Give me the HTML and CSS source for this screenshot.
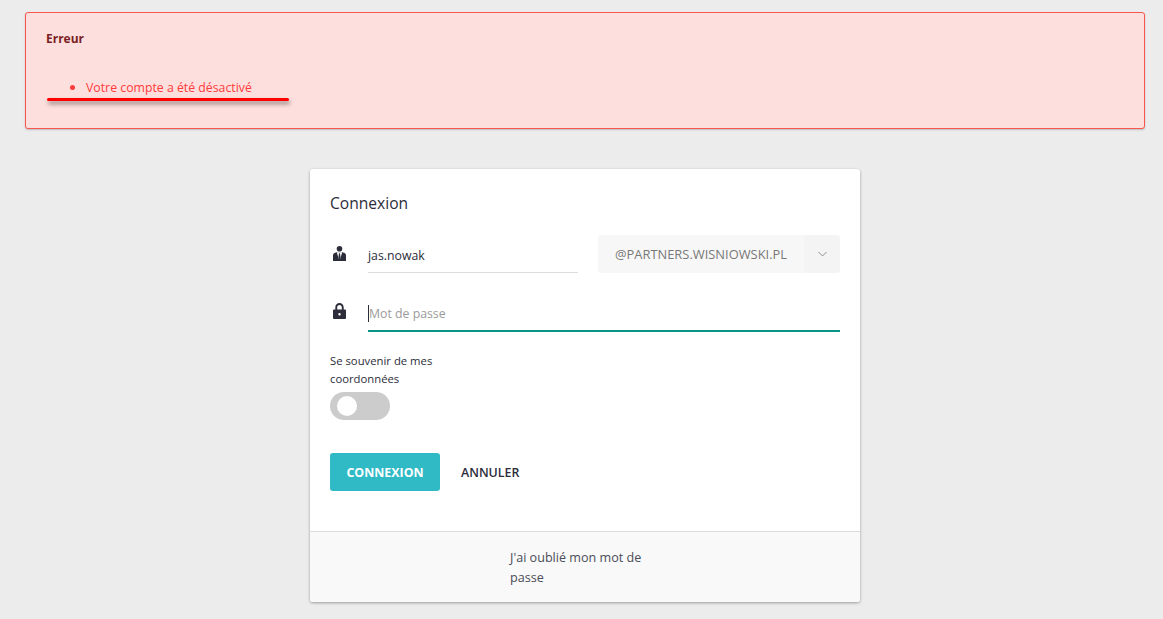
FILE: index.html
```html
<!DOCTYPE html>
<html lang="fr">
<head>
    <meta charset="UTF-8">
    <meta name="viewport" content="width=device-width, initial-scale=1.0">
    <title>Connexion</title>
    <link rel="stylesheet" href="styles.css">
</head>
<body>
    <div class="alert">
        <h4 class="alert-title">Erreur</h4>
        <ul class="alert-list">
            <li>Votre compte a été désactivé</li>
        </ul>
        <div class="alert-mark"></div>
    </div>

    <div class="card">
        <div class="card-body">
            <h2 class="card-title">Connexion</h2>

            <div class="field-row field-user">
                <svg class="field-icon icon-user" width="13" height="15" viewBox="0 0 13 15">
                    <circle cx="6.5" cy="2.8" r="2.8" fill="#2b2d3a"/>
                    <path d="M0 15V9.2C0 7.6 1.4 6.6 3.6 6.2H9.4C11.6 6.6 13 7.6 13 9.2V15Z" fill="#2b2d3a"/>
                    <path d="M3.8 6.2H9.2L7.4 12.4H5.6Z" fill="#fff"/>
                    <path d="M6 7.2H7L7.6 11.4L6.5 13.2L5.4 11.4Z" fill="#2b2d3a"/>
                </svg>
                <div class="input-user">jas.nowak</div>
                <div class="domain-select">
                    <span class="domain-value">@PARTNERS.WISNIOWSKI.PL</span>
                    <span class="domain-arrow">
                        <svg width="9" height="6" viewBox="0 0 9 6"><path d="M0.5 1L4.5 5L8.5 1" fill="none" stroke="#8a8f96" stroke-width="1"/></svg>
                    </span>
                </div>
            </div>

            <div class="field-row field-pass">
                <svg class="field-icon icon-lock" width="13" height="16" viewBox="0 0 14 17">
                    <path fill-rule="evenodd" d="M2.5 7V4.5C2.5 2 4.5 0 7 0S11.5 2 11.5 4.5V7H13C13.6 7 14 7.4 14 8V16C14 16.6 13.6 17 13 17H1C0.4 17 0 16.6 0 16V8C0 7.4 0.4 7 1 7ZM4.5 7H9.5V4.5C9.5 3.1 8.4 2 7 2S4.5 3.1 4.5 4.5ZM7 10.7A1.3 1.3 0 1 0 7 13.3A1.3 1.3 0 1 0 7 10.7Z" fill="#2b2d3a"/>
                </svg>
                <div class="input-pass"><span class="caret"></span>Mot de passe</div>
            </div>

            <div class="remember">
                <div class="remember-label">Se souvenir de mes coordonnées</div>
                <div class="switch"><span class="switch-knob"></span></div>
            </div>

            <div class="actions">
                <button class="btn btn-primary">CONNEXION</button>
                <button class="btn btn-link">ANNULER</button>
            </div>
        </div>
        <div class="card-footer">
            <a class="forgot">J'ai oublié mon mot de passe</a>
        </div>
    </div>
</body>
</html>
```

FILE: styles.css
```css
body {
    margin: 0;
    padding: 12px 18px 17px 25px;
    background: #ececec;
    font-family: 'Open Sans', sans-serif;
    color: #2b2d3a;
    font-size: 12.3px;
}
.alert {
    position: relative;
    height: 115px;
    padding: 0 20px;
    background: #fddfdd;
    border: 1px solid #f6564e;
    border-radius: 3px;
    box-shadow: 0 1px 2px rgba(0, 0, 0, 0.2);
    color: #ff3b3b;
}
.alert-title {
    margin: 0;
    padding-top: 17px;
    font-size: 12px;
    line-height: 17px;
    font-weight: 700;
    color: #7a1f24;
}
.alert-list {
    margin: 31px 0 0;
    padding-left: 40px;
    line-height: 20px;
    list-style: none;
}
.alert-list li {
    position: relative;
}
.alert-list li::before {
    content: "";
    position: absolute;
    left: -16px;
    top: 7px;
    width: 5px;
    height: 5px;
    border-radius: 50%;
    background: #ff3b3b;
}
.alert-mark {
    position: absolute;
    left: 21px;
    top: 85px;
    width: 242px;
    height: 3px;
    border-radius: 2px;
    background: #ff0000;
    box-shadow: 1px 3px 4px rgba(0, 0, 0, 0.45);
}
.card {
    width: 550px;
    margin: 40px auto 0 285px;
    background: #fff;
    border-radius: 3px;
    box-shadow: 0 1px 3px rgba(0, 0, 0, 0.35);
}
.card-body {
    padding: 24px 20px 40px;
}
.card-title {
    margin: 0;
    font-size: 15.6px;
    line-height: 20px;
    font-weight: 400;
}
.field-row {
    display: flex;
}
.field-user {
    margin-top: 22px;
    height: 38px;
}
.field-pass {
    margin-top: 21px;
    height: 38px;
}
.field-icon {
    flex: none;
    margin-left: 3px;
    margin-right: 22px;
}
.icon-user {
    margin-top: 11px;
}
.icon-lock {
    margin-top: 9px;
}
.input-user {
    width: 210px;
    height: 37px;
    line-height: 41px;
    border-bottom: 1px solid #dcdcdc;
}
.domain-select {
    display: flex;
    margin-left: 20px;
    width: 242px;
    height: 38px;
    background: #f7f7f7;
    border-radius: 3px;
    color: #787878;
    font-size: 12.9px;
    line-height: 39px;
}
.domain-value {
    flex: 1;
    text-align: center;
}
.domain-arrow {
    display: flex;
    width: 36px;
    justify-content: center;
    align-items: center;
    background: #f4f4f4;
    border-radius: 0 3px 3px 0;
}
.input-pass {
    flex: 1;
    display: flex;
    align-items: center;
    height: 38px;
    padding-top: 2px;
    box-sizing: border-box;
    border-bottom: 2px solid #0a9582;
    color: #9b9b9b;
}
.caret {
    width: 1px;
    height: 17px;
    background: #2b2d3a;
}
.remember {
    margin-top: 20px;
    width: 120px;
}
.remember-label {
    font-size: 11.3px;
    line-height: 18px;
}
.switch {
    position: relative;
    margin-top: 4px;
    width: 60px;
    height: 28px;
    border-radius: 14px;
    background: #cccccc;
}
.switch-knob {
    position: absolute;
    left: 7px;
    top: 4px;
    width: 20px;
    height: 20px;
    border-radius: 50%;
    background: #fff;
}
.actions {
    display: flex;
    margin-top: 33px;
}
.btn {
    height: 38px;
    border: 0;
    border-radius: 3px;
    font-family: inherit;
    font-size: 12.4px;
    font-weight: 600;
    padding: 0;
    background: none;
    color: #2b2d3a;
}
.btn-primary {
    width: 110px;
    background: #2fbac6;
    color: #fff;
    font-weight: 700;
}
.btn-link {
    margin-left: 21px;
}
.card-footer {
    height: 70px;
    padding-left: 200px;
    background: #f9f9f9;
    border-top: 1px solid #dcdcdc;
    border-radius: 0 0 3px 3px;
}
.forgot {
    display: block;
    width: 140px;
    padding-top: 16px;
    font-size: 12.6px;
    line-height: 20px;
    color: #4a4c58;
}
```
